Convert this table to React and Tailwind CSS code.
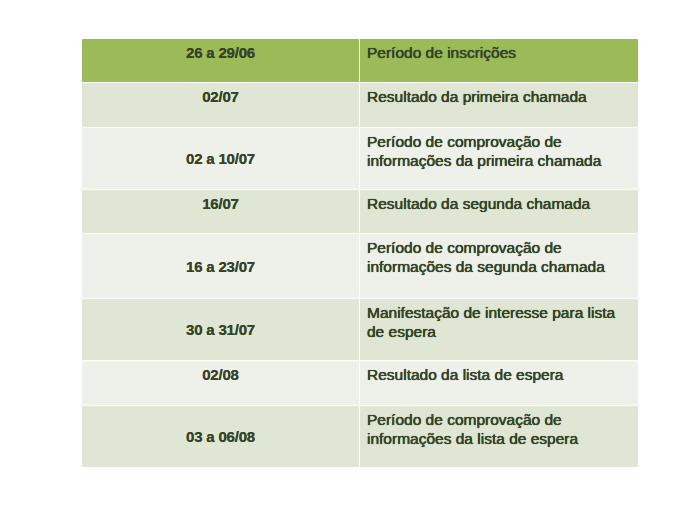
import React from 'react';

// calendar rows: h = row height in px (incl. the white rule on top)
const rows = [
  { date: '26 a 29/06', text: ['Período de inscrições'], h: 'h-[43px]', bg: 'bg-[#9bbb59]', head: true },
  { date: '02/07', text: ['Resultado da primeira chamada'], h: 'h-[45px]', bg: 'bg-[#dfe6d3]' },
  { date: '02 a 10/07', text: ['Período de comprovação de', 'informações da primeira chamada'], h: 'h-[62px]', bg: 'bg-[#eef1e9]' },
  { date: '16/07', text: ['Resultado da segunda chamada'], h: 'h-[44px]', bg: 'bg-[#dfe6d3]' },
  { date: '16 a 23/07', text: ['Período de comprovação de', 'informações da segunda chamada'], h: 'h-[65px]', bg: 'bg-[#eef1e9]' },
  { date: '30 a 31/07', text: ['Manifestação de interesse para lista', 'de espera'], h: 'h-[62px]', bg: 'bg-[#dfe6d3]' },
  { date: '02/08', text: ['Resultado da lista de espera'], h: 'h-[45px]', bg: 'bg-[#eef1e9]' },
  { date: '03 a 06/08', text: ['Período de comprovação de', 'informações da lista de espera'], h: 'h-[62px]', bg: 'bg-[#dfe6d3]' },
];

const App = () => {
  return (
    <div className="w-[700px] h-[525px] bg-white pt-[39px] pl-[82px] font-['Liberation_Sans',Arial,sans-serif] text-[#36442a]">
      <div className="w-[556px] flex flex-col">
        {rows.map((row, i) => {
          const multi = row.text.length > 1;
          return (
            <div key={i} className={`flex ${row.h} ${i > 0 ? 'border-t border-white' : ''}`}>
              {/* Date column */}
              <div
                className={`w-[278px] ${row.bg} border-r border-white flex justify-center ${
                  multi ? 'items-center' : 'items-start pt-[4px]'
                } text-[15px] leading-[19px] font-bold tracking-[-0.2px] [text-shadow:0_0_0.6px_#36442a]`}
              >
                {row.date}
              </div>
              {/* Description column */}
              <div className={`flex-1 ${row.bg} pl-[7px] pt-[4px] text-[15.5px] leading-[19px] [text-shadow:0_0_0.8px_#36442a,0_0_0.4px_#36442a]`}>
                {row.text.map((t, j) => (
                  <div key={j}>{t}</div>
                ))}
              </div>
            </div>
          );
        })}
      </div>
    </div>
  );
};

export default App;
